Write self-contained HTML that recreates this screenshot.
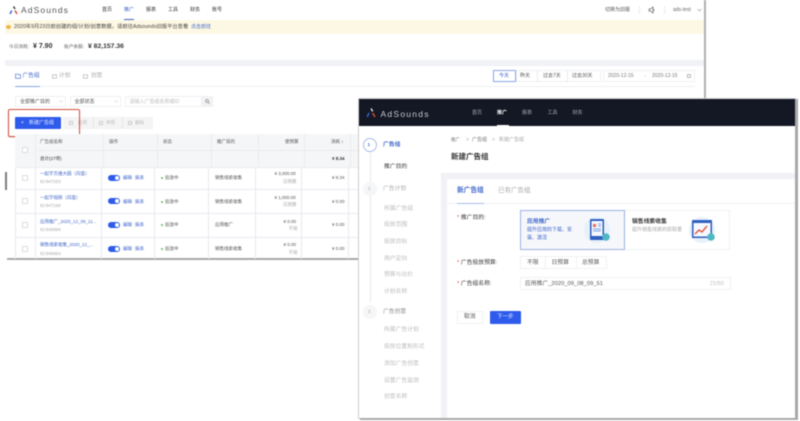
<!DOCTYPE html>
<html lang="zh"><head><meta charset="utf-8"><title>AdSounds</title>
<style>
*{box-sizing:border-box}
html,body{margin:0;padding:0;width:800px;height:421px;overflow:hidden;background:#fff}
#r{position:absolute;left:0;top:0;width:800px;height:421px;overflow:hidden;filter:blur(.65px);font-family:"Liberation Sans","Noto Sans CJK SC",sans-serif;color:#444}
.b{position:absolute}
.t{position:absolute;white-space:nowrap;line-height:10px;height:10px;font-size:5px;color:#555}
.lk{color:#3f66c9}.g{color:#aaa}.gl{color:#bbb}.d{color:#333}
.s{font-size:5.8px}
.tbl .t{font-size:4.5px}
.tg{position:absolute;width:12px;height:6px;border-radius:3px;background:#2e5bec}
.tg:after{content:"";position:absolute;right:1px;top:1px;width:4px;height:4px;border-radius:50%;background:#fff}
.dot{position:absolute;width:2px;height:2px;border-radius:50%;background:#5cb85c}
.ln{position:absolute;background:#e9ebef}
.cb{position:absolute;width:6px;height:6px;border:1px solid #ddd;background:#fff}
</style></head><body><div id="r">

<!-- left window -->
<div class="b" style="left:5px;top:0;width:700px;height:259px;background:#fff;overflow:hidden"></div>
<div class="b" style="left:704px;top:0;width:2px;height:98px;background:#b0b0b2"></div>
<div class="b" style="left:7px;top:258px;width:352px;height:2px;background:#a8a8aa"></div>
<div class="b" style="left:5px;top:172px;width:2px;height:18px;background:#7d7d7d"></div>

<svg class="b" style="left:9px;top:6px" width="9" height="9" viewBox="0 0 9 9"><path d="M4.5 0.5 L6 3" stroke="#333" stroke-width="1.4"/><path d="M6 4.5 L8 8" stroke="#e0493b" stroke-width="1.4"/><path d="M2.8 4.500 L1 8" stroke="#3b62d9" stroke-width="1.4"/></svg>
<div class="t" style="left:21px;top:5px;font-size:8.5px;letter-spacing:1.1px;color:#555">AdSounds</div>
<div class="t d" style="left:102px;top:4.5px">首页</div>
<div class="t lk" style="left:124px;top:4.5px">推广</div>
<div class="t d" style="left:146px;top:4.5px">报表</div>
<div class="t d" style="left:168px;top:4.5px">工具</div>
<div class="t d" style="left:190px;top:4.5px">财务</div>
<div class="t d" style="left:212px;top:4.5px">账号</div>
<div class="b" style="left:124px;top:18.5px;width:10px;height:1.2px;background:#3f66c9"></div>
<div class="t" style="left:605px;top:4.5px">切换为旧版</div>
<div class="ln" style="left:639px;top:6px;width:1px;height:8px"></div>
<svg class="b" style="left:648px;top:6px" width="8" height="8" viewBox="0 0 8 8"><path d="M1 3v2h1.500L5 7V1L2.500 3z" fill="none" stroke="#666" stroke-width=".7"/><path d="M6 3v2" stroke="#666" stroke-width=".7"/></svg>
<div class="ln" style="left:664px;top:6px;width:1px;height:8px"></div>
<div class="t" style="left:673px;top:4.500px;color:#666">ads-test</div>
<svg class="b" style="left:697px;top:8px" width="5" height="4" viewBox="0 0 5 4"><path d="M.5 1l2 2 2-2" fill="none" stroke="#999" stroke-width=".6"/></svg>

<div class="b" style="left:5px;top:20px;width:699px;height:13.500px;background:#fdf8e4"></div>
<div class="b" style="left:6px;top:25px;width:5px;height:4px;border-radius:50%;background:#f0b53c"></div>
<div class="t" style="left:14px;top:22px;color:#444;font-size:5.3px">2020年9月23日前创建的组/计划/创意数据，请前往Adsounds旧版平台查看</div>
<div class="t lk" style="left:191px;top:22px">点击前往</div>

<div class="t" style="left:9px;top:42px;color:#666;font-size:4.700px">今日消耗:</div>
<div class="t" style="left:33px;top:41.500px;font-size:7px;font-weight:bold;color:#333">¥ 7.90</div>
<div class="t" style="left:64px;top:42px;color:#666;font-size:4.700px">账户余额:</div>
<div class="t" style="left:88px;top:41.500px;font-size:6.800px;font-weight:bold;color:#333">¥ 82,157.36</div>

<div class="b" style="left:5px;top:60px;width:699px;height:5.500px;background:#f0f2f5"></div>

<svg class="b" style="left:15px;top:73px" width="6" height="6" viewBox="0 0 6 6"><path d="M.5 1h2l.5.700h2.500V5.300H.5z" fill="none" stroke="#3f66c9" stroke-width=".6"/></svg>
<div class="t lk" style="left:22.500px;top:71px;font-size:5.700px">广告组</div>
<svg class="b" style="left:52px;top:74px" width="5" height="5" viewBox="0 0 5 5"><rect x=".5" y=".8" width="4" height="3.400" fill="none" stroke="#aaa" stroke-width=".6"/></svg>
<div class="t g" style="left:59px;top:71px;font-size:5.700px">计划</div>
<svg class="b" style="left:83px;top:74px" width="5" height="5" viewBox="0 0 5 5"><rect x=".5" y=".8" width="4" height="3.400" fill="none" stroke="#aaa" stroke-width=".6"/></svg>
<div class="t g" style="left:91px;top:71px;font-size:5.700px">创意</div>
<div class="ln" style="left:15px;top:86px;width:680px;height:1px;background:#eef0f3"></div>
<div class="b" style="left:15px;top:85.500px;width:25px;height:1px;background:#8aa6e6"></div>

<div class="b" style="left:492.500px;top:70px;width:23px;height:12px;border:1px solid #8aa6e6;background:#fff"></div>
<div class="t lk" style="left:499px;top:70.500px">今天</div>
<div class="b" style="left:515.500px;top:70px;width:85px;height:12px;border:1px solid #eef0f3"></div>
<div class="t" style="left:520px;top:70.500px">昨天</div>
<div class="t" style="left:543px;top:70.500px">过去7天</div>
<div class="t" style="left:572px;top:70.500px">过去30天</div>
<div class="ln" style="left:537px;top:70px;width:1px;height:12px"></div>
<div class="ln" style="left:567px;top:70px;width:1px;height:12px"></div>
<div class="b" style="left:603px;top:70px;width:92px;height:12px;border:1px solid #eef0f3"></div>
<div class="t" style="left:608px;top:70.500px;color:#777">2020-12-15</div>
<div class="t g" style="left:644px;top:70.500px">-</div>
<div class="t" style="left:652px;top:70.500px;color:#777">2020-12-15</div>
<div class="b" style="left:686.500px;top:74px;width:4px;height:4px;border:.6px solid #bbb"></div>

<div class="b" style="left:15px;top:96px;width:51px;height:11px;border:1px solid #eef0f3"></div>
<div class="t" style="left:20px;top:96.500px">全部推广目的</div>
<svg class="b" style="left:59px;top:100px" width="4" height="3" viewBox="0 0 4 3"><path d="M.3.500l1.700 1.700L3.700.500" fill="none" stroke="#bbb" stroke-width=".5"/></svg>
<div class="b" style="left:70px;top:96px;width:51px;height:11px;border:1px solid #eef0f3"></div>
<div class="t" style="left:74.500px;top:96.500px">全部状态</div>
<svg class="b" style="left:113.500px;top:100px" width="4" height="3" viewBox="0 0 4 3"><path d="M.3.500l1.700 1.700L3.700.500" fill="none" stroke="#bbb" stroke-width=".5"/></svg>
<div class="b" style="left:124.500px;top:96px;width:88.500px;height:11px;border:1px solid #eef0f3"></div>
<div class="b" style="left:201px;top:96px;width:12px;height:11px;background:#f1f2f4"></div>
<div class="t gl" style="left:129.500px;top:96.500px">请输入广告组名称或ID</div>
<svg class="b" style="left:204.500px;top:99px" width="5" height="5" viewBox="0 0 5 5"><circle cx="2" cy="2" r="1.400" fill="none" stroke="#777" stroke-width=".6"/><path d="M3 3l1.500 1.500" stroke="#777" stroke-width=".6"/></svg>

<div class="b" style="left:15px;top:116.500px;width:45.500px;height:12.500px;background:#2e5bec;border-radius:1px"></div>
<div class="t" style="left:21px;top:117.500px;color:#dfe7ff">+</div>
<div class="t" style="left:29px;top:117.700px;color:#e4eaff">新建广告组</div>
<div class="b" style="left:63px;top:116.500px;width:89.500px;height:12.500px;background:#f4f4f5"></div>
<div class="ln" style="left:93px;top:116.500px;width:1px;height:12.500px;background:#e6e6e8"></div>
<div class="ln" style="left:122px;top:116.500px;width:1px;height:12.500px;background:#e6e6e8"></div>
<div class="t gl" style="left:78px;top:117.700px;font-size:4.500px">启用</div>
<div class="t gl" style="left:106px;top:117.700px;font-size:4.500px">停用</div>
<div class="t gl" style="left:135px;top:117.700px;font-size:4.500px">删除</div>
<div class="b" style="left:69px;top:120.500px;width:4px;height:4px;border:.6px solid #ccc"></div>
<div class="b" style="left:99px;top:120.500px;width:4px;height:4px;border:.6px solid #ccc"></div>
<div class="b" style="left:128px;top:120.500px;width:4px;height:4px;border:.6px solid #ccc"></div>
<div class="b" style="left:8px;top:109px;width:72px;height:27.500px;border:1.400px solid #d6503f;border-radius:2px;box-shadow:0 .5px 1px rgba(120,60,50,.35)"></div>

<!-- table -->
<div class="tbl">
<div class="b" style="left:15px;top:134px;width:344px;height:33px;background:#f5f6f7"></div>
<div class="ln" style="left:35px;top:150px;width:324px;height:1px"></div>
<div class="ln" style="left:35px;top:134px;width:1px;height:33px"></div>
<div class="ln" style="left:103px;top:134px;width:1px;height:33px"></div>
<div class="ln" style="left:157px;top:134px;width:1px;height:33px"></div>
<div class="ln" style="left:211px;top:134px;width:1px;height:33px"></div>
<div class="ln" style="left:258px;top:134px;width:1px;height:33px"></div>
<div class="ln" style="left:304px;top:134px;width:1px;height:33px"></div>
<div class="ln" style="left:350px;top:134px;width:1px;height:33px"></div>
<div class="cb" style="left:22px;top:147px"></div>
<div class="t" style="left:40px;top:137px">广告组名称</div>
<div class="t" style="left:109px;top:137px">操作</div>
<div class="t" style="left:163px;top:137px">状态</div>
<div class="t" style="left:217px;top:137px">推广目的</div>
<div class="t" style="left:285px;top:137px">使预算</div>
<div class="t" style="left:331px;top:137px">消耗 ↕</div>
<div class="t d" style="left:40px;top:153.500px">总计(27项)</div>
<div class="t d" style="left:332px;top:153.500px;font-weight:bold">¥ 8.34</div>

<div class="ln" style="left:15px;top:167px;width:344px;height:1px"></div>
<div class="ln" style="left:15px;top:189px;width:344px;height:1px"></div>
<div class="ln" style="left:15px;top:213px;width:344px;height:1px"></div>
<div class="ln" style="left:15px;top:237px;width:344px;height:1px"></div>
<div class="ln" style="left:15px;top:167px;width:1px;height:92px"></div>
<div class="ln" style="left:34.500px;top:167px;width:1px;height:92px"></div>
<div class="ln" style="left:101px;top:167px;width:1px;height:92px"></div>
<div class="ln" style="left:154px;top:167px;width:1px;height:92px"></div>
<div class="ln" style="left:208px;top:167px;width:1px;height:92px"></div>
<div class="ln" style="left:255px;top:167px;width:1px;height:92px"></div>
<div class="ln" style="left:301px;top:167px;width:1px;height:92px"></div>
<div class="ln" style="left:348px;top:167px;width:1px;height:92px"></div>

<!-- row 1 -->
<div class="cb" style="left:22px;top:175px"></div>
<div class="t lk" style="left:40px;top:169px">一起学方维大圆（向芸）</div>
<div class="t g" style="left:40px;top:177px">ID:847253</div>
<div class="tg" style="left:108px;top:174.500px"></div>
<div class="t lk" style="left:123px;top:172.500px">编辑</div><div class="t lk" style="left:135px;top:172.500px">报表</div>
<div class="dot" style="left:160.500px;top:177px"></div><div class="t" style="left:165px;top:173px">投放中</div>
<div class="t" style="left:215px;top:173px">销售线索收集</div>
<div class="t" style="left:274.500px;top:169px">¥ 3,000.00</div><div class="t g" style="left:283px;top:176.500px">日预算</div>
<div class="t" style="left:332px;top:173px">¥ 8.34</div>
<!-- row 2 -->
<div class="cb" style="left:22px;top:198px"></div>
<div class="t lk" style="left:40px;top:193px">一起学视频（向芸）</div>
<div class="t g" style="left:40px;top:201px">ID:847190</div>
<div class="tg" style="left:108px;top:198px"></div>
<div class="t lk" style="left:123px;top:196.500px">编辑</div><div class="t lk" style="left:135px;top:196.500px">报表</div>
<div class="dot" style="left:160.500px;top:200.500px"></div><div class="t" style="left:165px;top:196.500px">投放中</div>
<div class="t" style="left:215px;top:196.500px">销售线索收集</div>
<div class="t" style="left:274.500px;top:193px">¥ 1,000.00</div><div class="t g" style="left:283px;top:200px">日预算</div>
<div class="t" style="left:332px;top:196.500px">¥ 0.00</div>
<!-- row 3 -->
<div class="cb" style="left:22px;top:222px"></div>
<div class="t lk" style="left:40px;top:216.500px">应用推广_2020_12_09_11...</div>
<div class="t g" style="left:40px;top:225px">ID:846884</div>
<div class="tg" style="left:108px;top:221.500px"></div>
<div class="t lk" style="left:123px;top:220px">编辑</div><div class="t lk" style="left:135px;top:220px">报表</div>
<div class="dot" style="left:160.500px;top:224px"></div><div class="t" style="left:165px;top:220px">投放中</div>
<div class="t" style="left:215px;top:220px">应用推广</div>
<div class="t" style="left:283.500px;top:216.500px">¥ 0.00</div><div class="t g" style="left:288.500px;top:223.500px">不限</div>
<div class="t" style="left:332px;top:220px">¥ 0.00</div>
<!-- row 4 -->
<div class="cb" style="left:22px;top:245.500px"></div>
<div class="t lk" style="left:40px;top:240px">销售线索收集_2020_12_...</div>
<div class="t g" style="left:40px;top:248.500px">ID:846864</div>
<div class="tg" style="left:108px;top:245.500px"></div>
<div class="t lk" style="left:123px;top:244px">编辑</div><div class="t lk" style="left:135px;top:244px">报表</div>
<div class="dot" style="left:160.500px;top:248px"></div><div class="t" style="left:165px;top:244px">投放中</div>
<div class="t" style="left:215px;top:244px">销售线索收集</div>
<div class="t" style="left:283.500px;top:240px">¥ 0.00</div><div class="t g" style="left:288.500px;top:247.500px">不限</div>
<div class="t" style="left:332px;top:244px">¥ 0.00</div>
</div>

<!-- right window -->
<div class="b" style="left:358px;top:98px;width:438px;height:321px;background:#cfcfd1"></div>
<div class="b" style="left:795px;top:99px;width:2.500px;height:320.500px;background:#a9a9ab"></div>
<div class="b" style="left:360px;top:418px;width:437.500px;height:2px;background:#a9a9ab"></div>
<div class="b" style="left:359px;top:99px;width:436px;height:319px;background:#f0f2f5"></div>
<div class="b" style="left:359px;top:99px;width:436px;height:27px;background:#141824"></div>
<svg class="b" style="left:366px;top:108px" width="10" height="10" viewBox="0 0 9 9"><path d="M4.500 .5L6 3" stroke="#ddd" stroke-width="1.300"/><path d="M6 4.500L8 8" stroke="#e0493b" stroke-width="1.300"/><path d="M2.800 4.500L1 8" stroke="#3b62d9" stroke-width="1.300"/></svg>
<div class="t" style="left:380.500px;top:108.500px;font-size:8.500px;letter-spacing:1.250px;color:#c8cad0">AdSounds</div>
<div class="t" style="left:472px;top:108px;color:#a5a8b0">首页</div>
<div class="t" style="left:497px;top:108px;color:#fff;font-weight:bold">推广</div>
<div class="t" style="left:522px;top:108px;color:#a5a8b0">报表</div>
<div class="t" style="left:547.500px;top:108px;color:#a5a8b0">工具</div>
<div class="t" style="left:572.500px;top:108px;color:#a5a8b0">财务</div>
<div class="b" style="left:497px;top:125px;width:12px;height:2px;background:#fff"></div>

<!-- sidebar -->
<div class="b" style="left:359px;top:126px;width:82px;height:292px;background:#fff"></div>
<div class="b" style="left:369.500px;top:150px;width:1px;height:152px;background:#e6e8ec"></div>
<div class="b" style="left:362.500px;top:137.500px;width:14px;height:14px;border-radius:50%;border:1px solid #a9bdeb;background:#fff"></div>
<div class="t lk" style="left:367.500px;top:139.500px;font-size:4.500px;font-weight:bold">1</div>
<div class="t lk s" style="left:383px;top:139.500px;font-weight:bold">广告组</div>
<div class="t d s" style="left:384px;top:161.500px">推广目的</div>
<div class="b" style="left:362.500px;top:181.500px;width:14px;height:14px;border-radius:50%;background:#f5f6f7"></div>
<div class="t g" style="left:368px;top:183.500px;font-size:4.500px">2</div>
<div class="t g s" style="left:383px;top:183.500px">广告计划</div>
<div class="t gl s" style="left:384px;top:203.500px">所属广告组</div>
<div class="t gl s" style="left:384px;top:220px">投放范围</div>
<div class="t gl s" style="left:384px;top:236.500px">投放目标</div>
<div class="t gl s" style="left:384px;top:253.500px">用户定向</div>
<div class="t gl s" style="left:384px;top:270px">预算与出价</div>
<div class="t gl s" style="left:384px;top:287px">计划名称</div>
<div class="b" style="left:362.500px;top:304.500px;width:14px;height:14px;border-radius:50%;background:#f5f6f7"></div>
<div class="t g" style="left:368px;top:306.500px;font-size:4.500px">3</div>
<div class="t g s" style="left:383px;top:306.500px;color:#888">广告创意</div>
<div class="t gl s" style="left:384px;top:325px">所属广告计划</div>
<div class="t gl s" style="left:384px;top:342px">投放位置和形式</div>
<div class="t gl s" style="left:384px;top:358.500px">添加广告创意</div>
<div class="t gl s" style="left:384px;top:375.500px">设置广告监测</div>
<div class="t gl s" style="left:384px;top:392px">创意名称</div>

<!-- main head -->
<div class="b" style="left:441px;top:126px;width:354px;height:47px;background:#fff"></div>
<div class="t" style="left:451px;top:135px;color:#777;font-size:4.500px">推广</div>
<div class="t g" style="left:466px;top:135px">&gt;</div>
<div class="t" style="left:472px;top:135px;color:#777">广告组</div>
<div class="t g" style="left:492px;top:135px">&gt;</div>
<div class="t g" style="left:499px;top:135px">新建广告组</div>
<div class="t" style="left:451px;top:152px;font-size:7.500px;color:#333;font-weight:bold">新建广告组</div>

<!-- main card -->
<div class="b" style="left:447px;top:179px;width:348px;height:239px;background:#fff"></div>
<div class="t lk" style="left:457px;top:186px;font-size:6.700px;font-weight:bold">新广告组</div>
<div class="t g" style="left:498px;top:186px;font-size:6.500px">已有广告组</div>
<div class="ln" style="left:447px;top:203px;width:348px;height:1px;background:#eef0f3"></div>
<div class="b" style="left:457px;top:202.500px;width:27px;height:1.500px;background:#a9bdeb"></div>

<div class="t d" style="left:457px;top:212.500px;font-size:5.800px"><span style="color:#e0493b">*</span> 推广目的:</div>
<div class="t d" style="left:457px;top:258px;font-size:5.800px"><span style="color:#e0493b">*</span> 广告投放预算:</div>
<div class="t d" style="left:457px;top:278.500px;font-size:5.800px"><span style="color:#e0493b">*</span> 广告组名称:</div>

<div class="b" style="left:520px;top:210px;width:210px;height:40px;border:1px solid #f0f1f4"></div>
<div class="b" style="left:520px;top:210px;width:105px;height:40px;border:1px solid #9cb3e2;background:#f5f7fb"></div>
<div class="t lk" style="left:527px;top:217px;font-size:5.800px;font-weight:bold">应用推广</div>
<div class="t lk" style="left:527px;top:225px">提升应用的下载、安</div>
<div class="t lk" style="left:527px;top:232.500px">装、激活</div>
<svg class="b" style="left:582px;top:216px" width="32" height="28" viewBox="0 0 32 28"><circle cx="15" cy="14" r="13" fill="#e6f1fa"/><rect x="8" y="3" width="14" height="21" rx="1" fill="#2f5fc0"/><rect x="9.500" y="5" width="11" height="15" fill="#f4f8ff"/><path d="M11 8h3v3h-3z" fill="#e36c5b"/><path d="M16 8h3M16 10h3M11 13h8M11 15h8" stroke="#7da2de" stroke-width="1"/><circle cx="24" cy="21" r="3.800" fill="#4fb8c4"/></svg>
<div class="t d" style="left:632px;top:217px;font-size:5.800px;font-weight:bold">销售线索收集</div>
<div class="t g" style="left:632px;top:225px">提升销售线索的获取量</div>
<svg class="b" style="left:685px;top:216px" width="34" height="28" viewBox="0 0 34 28"><circle cx="17" cy="14" r="13" fill="#e6f1fa"/><rect x="7" y="4" width="20" height="18" fill="#2f5fc0"/><rect x="8.500" y="7" width="17" height="13.500" fill="#f4f8ff"/><path d="M10 18l4-4 3 2 5-6" fill="none" stroke="#e0563f" stroke-width="1.400"/><circle cx="26" cy="21" r="3.800" fill="#4fb8c4"/></svg>

<div class="b" style="left:520px;top:256px;width:87px;height:13px;border:1px solid #f0f1f4"></div>
<div class="ln" style="left:545px;top:256px;width:1px;height:13px;background:#f0f1f4"></div>
<div class="ln" style="left:576px;top:256px;width:1px;height:13px;background:#f0f1f4"></div>
<div class="t" style="left:527px;top:258px;font-size:5.800px">不限</div>
<div class="t" style="left:551.500px;top:258px;font-size:5.800px">日预算</div>
<div class="t" style="left:582px;top:258px;font-size:5.800px">总预算</div>

<div class="b" style="left:520px;top:277px;width:210.500px;height:13px;border:1px solid #f0f1f4"></div>
<div class="t" style="left:525px;top:278.500px;font-size:5.800px">应用推广_2020_09_08_09_51</div>
<div class="t gl" style="left:710px;top:278.500px;font-size:5.500px">21/50</div>

<div class="b" style="left:457px;top:310.500px;width:26px;height:13px;border:1px solid #f0f1f4"></div>
<div class="t" style="left:464px;top:312px;font-size:5.800px">取消</div>
<div class="b" style="left:489.500px;top:310.500px;width:31.500px;height:13.500px;background:#2e5bec;border-radius:1px"></div>
<div class="t" style="left:497px;top:312px;font-size:5.500px;color:#e4eaff">下一步</div>

</div></body></html>
